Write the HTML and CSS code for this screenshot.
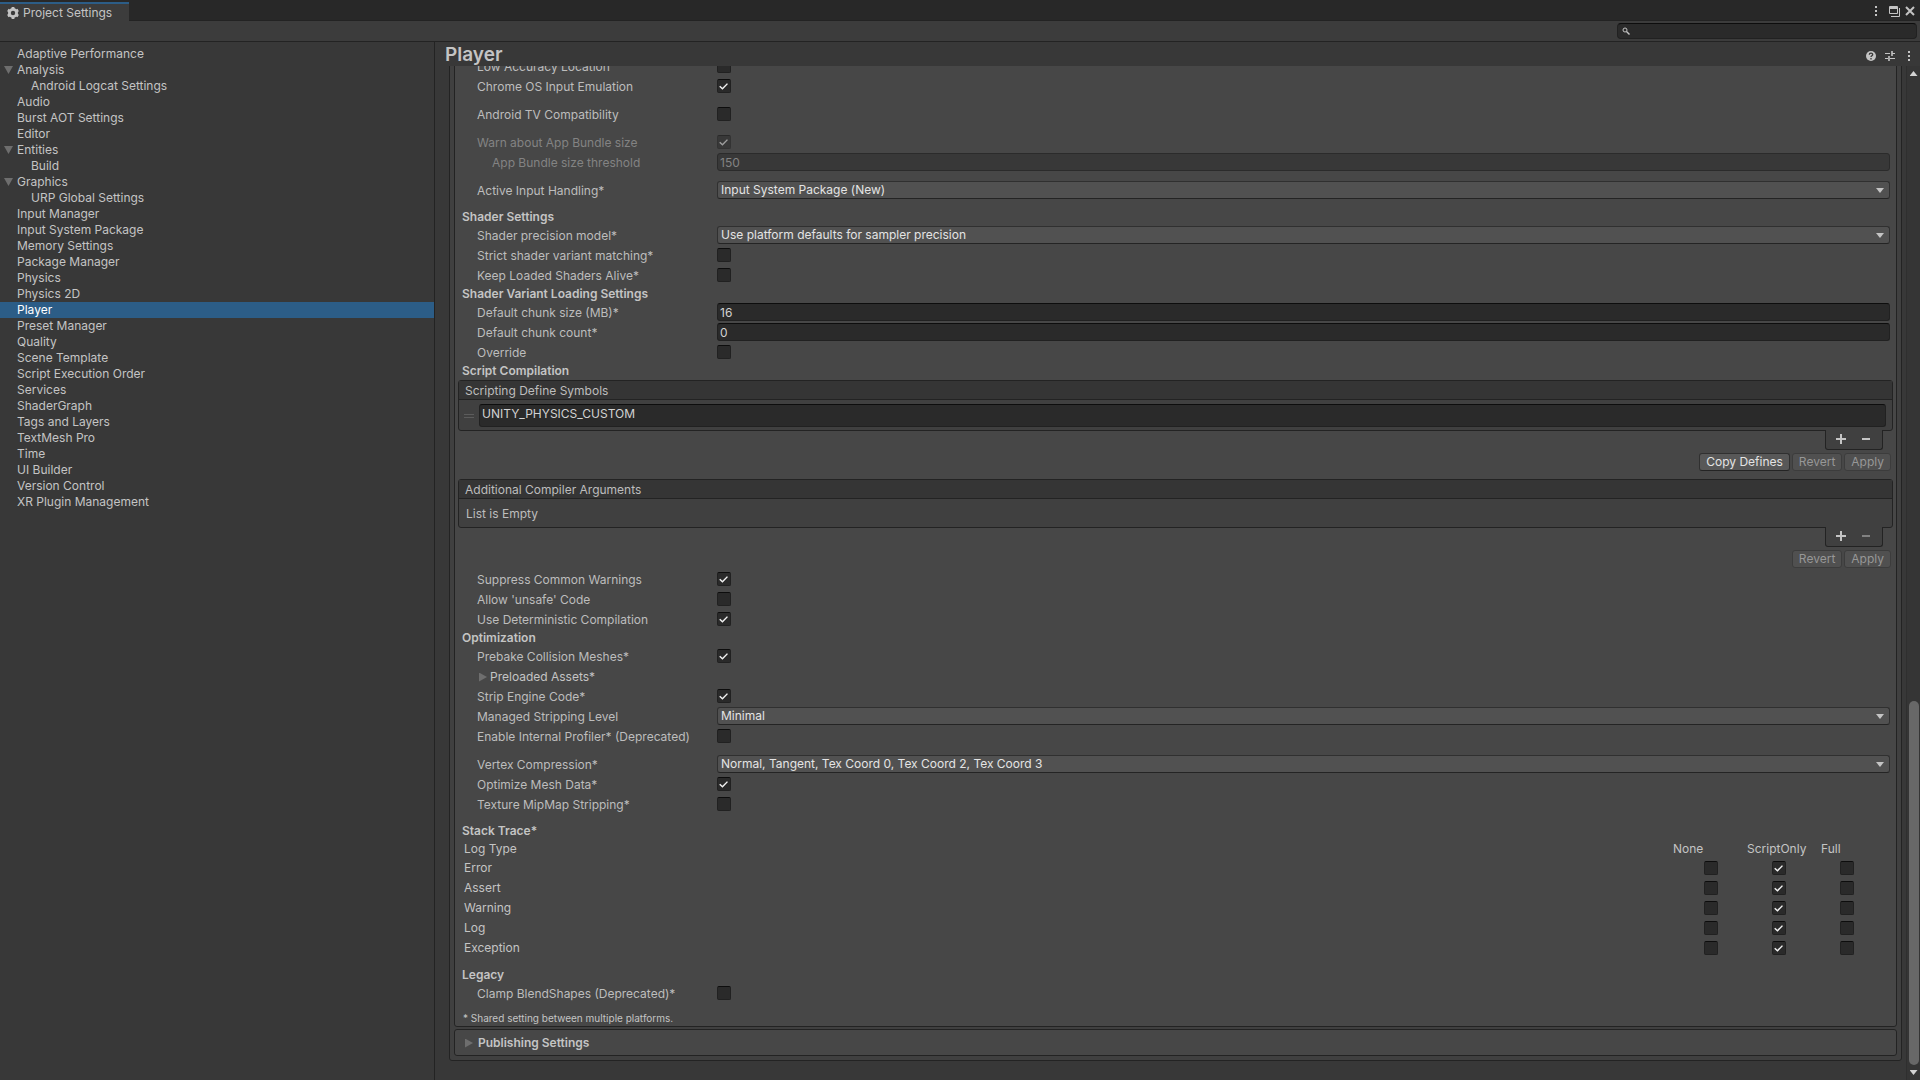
FILE: index.html
```html
<!DOCTYPE html>
<html lang="en">
<head>
    <meta charset="UTF-8">
    <meta name="viewport" content="width=device-width, initial-scale=1.0">
    <title>Project Settings</title>
    <link rel="stylesheet" href="styles.css">
</head>
<body>

    <!-- Window tab bar -->
    <header class="tab-bar">
        <div class="tab">
            <svg class="icon" width="14" height="14" viewBox="0 0 14 14">
                <circle cx="7" cy="7" r="3.6" fill="none" stroke="#c4c4c4" stroke-width="2.8"/>
                <path d="M7 1v12M1.8 4l10.4 6M1.8 10l10.4-6" stroke="#c4c4c4" stroke-width="2.8" fill="none"/>
                <circle cx="7" cy="7" r="2.2" fill="#3c3c3c"/>
            </svg>
            <span>Project Settings</span>
        </div>
        <div class="window-buttons">
            <button type="button" aria-label="Menu">
                <svg width="16" height="16" viewBox="0 0 16 16" fill="#c4c4c4"><path d="M7 3h2v2H7zM7 7h2v2H7zM7 11h2v2H7z"/></svg>
            </button>
            <button type="button" aria-label="Maximize">
                <svg width="16" height="16" viewBox="0 0 16 16" fill="none" stroke="#c4c4c4"><path d="M4.5 3.5h8v7h-8zM4 4.5h9M4 5.5h9M14.5 5v8.500H6"/></svg>
            </button>
            <button type="button" aria-label="Close">
                <svg width="16" height="16" viewBox="0 0 16 16" fill="none" stroke="#c4c4c4" stroke-width="2"><path d="M4 4l8 8M12 4l-8 8"/></svg>
            </button>
        </div>
    </header>

    <div class="toolbar">
        <label class="search">
            <svg width="8" height="8" viewBox="0 0 8 8" fill="none" stroke="#c4c4c4"><circle cx="3" cy="3" r="2"/><path d="M4.5 4.5l3 3" stroke-width="1.4"/></svg>
            <input type="text" aria-label="Search settings">
        </label>
    </div>

    <div class="content">
        <nav class="sidebar">
            <a href="#">Adaptive Performance</a>
            <a href="#" class="open">Analysis</a>
            <a href="#" class="child">Android Logcat Settings</a>
            <a href="#">Audio</a>
            <a href="#">Burst AOT Settings</a>
            <a href="#">Editor</a>
            <a href="#" class="open">Entities</a>
            <a href="#" class="child">Build</a>
            <a href="#" class="open">Graphics</a>
            <a href="#" class="child">URP Global Settings</a>
            <a href="#">Input Manager</a>
            <a href="#">Input System Package</a>
            <a href="#">Memory Settings</a>
            <a href="#">Package Manager</a>
            <a href="#">Physics</a>
            <a href="#">Physics 2D</a>
            <a href="#" class="selected">Player</a>
            <a href="#">Preset Manager</a>
            <a href="#">Quality</a>
            <a href="#">Scene Template</a>
            <a href="#">Script Execution Order</a>
            <a href="#">Services</a>
            <a href="#">ShaderGraph</a>
            <a href="#">Tags and Layers</a>
            <a href="#">TextMesh Pro</a>
            <a href="#">Time</a>
            <a href="#">UI Builder</a>
            <a href="#">Version Control</a>
            <a href="#">XR Plugin Management</a>
        </nav>

        <main class="main">
            <div class="title-row">
                <h1>Player</h1>
                <div class="title-buttons">
                    <button type="button" aria-label="Help">
                        <svg width="16" height="16" viewBox="0 0 16 16"><circle cx="8" cy="8" r="5" fill="#c4c4c4"/><path d="M6.3 6.8c0-2.2 3.4-2.2 3.4-.2 0 1.2-1.7 1.1-1.7 2.4M8 10v1.4" fill="none" stroke="#383838" stroke-width="1.3"/></svg>
                    </button>
                    <button type="button" aria-label="Presets">
                        <svg width="16" height="16" viewBox="0 0 16 16" fill="none" stroke="#c4c4c4"><path d="M3 5.5h5M10 5.5h3M3 10.5h3M8 10.5h5"/><path d="M10 3v5M7 8v5" stroke-width="1.6"/></svg>
                    </button>
                    <button type="button" aria-label="More">
                        <svg width="16" height="16" viewBox="0 0 16 16" fill="#c4c4c4"><path d="M7 3h2v2H7zM7 7h2v2H7zM7 11h2v2H7z"/></svg>
                    </button>
                </div>
            </div>

            <div class="scroll-area">
                <div class="scroll-view">
                    <div class="outer-box">
                        <section class="box settings">
                            <div class="row"><label for="low-accuracy">Low Accuracy Location</label><input type="checkbox" id="low-accuracy"></div>
                            <div class="row"><label for="chrome-os">Chrome OS Input Emulation</label><input type="checkbox" id="chrome-os" checked></div>
                            <div class="row space"><label for="android-tv">Android TV Compatibility</label><input type="checkbox" id="android-tv"></div>
                            <div class="row space disabled"><label for="warn-bundle">Warn about App Bundle size</label><input type="checkbox" id="warn-bundle" checked disabled></div>
                            <div class="row disabled"><label for="bundle-size" class="indent">App Bundle size threshold</label><input type="text" id="bundle-size" value="150" disabled></div>
                            <div class="row space"><label for="input-handling">Active Input Handling*</label><select id="input-handling"><option>Input System Package (New)</option></select></div>

                            <h2 class="space">Shader Settings</h2>
                            <div class="row"><label for="precision">Shader precision model*</label><select id="precision"><option>Use platform defaults for sampler precision</option></select></div>
                            <div class="row"><label for="strict">Strict shader variant matching*</label><input type="checkbox" id="strict"></div>
                            <div class="row"><label for="keep-shaders">Keep Loaded Shaders Alive*</label><input type="checkbox" id="keep-shaders"></div>

                            <h2>Shader Variant Loading Settings</h2>
                            <div class="row"><label for="chunk-size">Default chunk size (MB)*</label><input type="text" id="chunk-size" value="16"></div>
                            <div class="row"><label for="chunk-count">Default chunk count*</label><input type="text" id="chunk-count" value="0"></div>
                            <div class="row"><label for="override">Override</label><input type="checkbox" id="override"></div>

                            <h2>Script Compilation</h2>
                            <div class="list">
                                <div class="list-header">Scripting Define Symbols</div>
                                <div class="list-item">
                                    <span class="handle"></span>
                                    <input type="text" value="UNITY_PHYSICS_CUSTOM" aria-label="Define symbol">
                                </div>
                            </div>
                            <div class="list-footer">
                                <button type="button" class="plus" aria-label="Add"></button>
                                <button type="button" class="minus" aria-label="Remove"></button>
                            </div>
                            <div class="button-row">
                                <button type="button" class="button">Copy Defines</button>
                                <button type="button" class="button" disabled>Revert</button>
                                <button type="button" class="button" disabled>Apply</button>
                            </div>

                            <div class="list second">
                                <div class="list-header">Additional Compiler Arguments</div>
                                <div class="list-empty">List is Empty</div>
                            </div>
                            <div class="list-footer">
                                <button type="button" class="plus" aria-label="Add"></button>
                                <button type="button" class="minus" aria-label="Remove" disabled></button>
                            </div>
                            <div class="button-row">
                                <button type="button" class="button" disabled>Revert</button>
                                <button type="button" class="button" disabled>Apply</button>
                            </div>

                            <div class="row"><label for="suppress">Suppress Common Warnings</label><input type="checkbox" id="suppress" checked></div>
                            <div class="row"><label for="unsafe">Allow 'unsafe' Code</label><input type="checkbox" id="unsafe"></div>
                            <div class="row"><label for="deterministic">Use Deterministic Compilation</label><input type="checkbox" id="deterministic" checked></div>

                            <h2>Optimization</h2>
                            <div class="row"><label for="prebake">Prebake Collision Meshes*</label><input type="checkbox" id="prebake" checked></div>
                            <div class="row foldout"><button type="button">Preloaded Assets*</button></div>
                            <div class="row"><label for="strip">Strip Engine Code*</label><input type="checkbox" id="strip" checked></div>
                            <div class="row"><label for="stripping-level">Managed Stripping Level</label><select id="stripping-level"><option>Minimal</option></select></div>
                            <div class="row"><label for="profiler">Enable Internal Profiler* (Deprecated)</label><input type="checkbox" id="profiler"></div>
                            <div class="row space"><label for="vertex">Vertex Compression*</label><select id="vertex"><option>Normal, Tangent, Tex Coord 0, Tex Coord 2, Tex Coord 3</option></select></div>
                            <div class="row"><label for="optimize-mesh">Optimize Mesh Data*</label><input type="checkbox" id="optimize-mesh" checked></div>
                            <div class="row"><label for="mipmap">Texture MipMap Stripping*</label><input type="checkbox" id="mipmap"></div>

                            <h2 class="space">Stack Trace*</h2>
                            <table class="stack-trace">
                                <thead>
                                    <tr><th>Log Type</th><th>None</th><th>ScriptOnly</th><th>Full</th></tr>
                                </thead>
                                <tbody>
                                    <tr><th>Error</th><td><input type="checkbox" aria-label="Error None"></td><td><input type="checkbox" aria-label="Error ScriptOnly" checked></td><td><input type="checkbox" aria-label="Error Full"></td></tr>
                                    <tr><th>Assert</th><td><input type="checkbox" aria-label="Assert None"></td><td><input type="checkbox" aria-label="Assert ScriptOnly" checked></td><td><input type="checkbox" aria-label="Assert Full"></td></tr>
                                    <tr><th>Warning</th><td><input type="checkbox" aria-label="Warning None"></td><td><input type="checkbox" aria-label="Warning ScriptOnly" checked></td><td><input type="checkbox" aria-label="Warning Full"></td></tr>
                                    <tr><th>Log</th><td><input type="checkbox" aria-label="Log None"></td><td><input type="checkbox" aria-label="Log ScriptOnly" checked></td><td><input type="checkbox" aria-label="Log Full"></td></tr>
                                    <tr><th>Exception</th><td><input type="checkbox" aria-label="Exception None"></td><td><input type="checkbox" aria-label="Exception ScriptOnly" checked></td><td><input type="checkbox" aria-label="Exception Full"></td></tr>
                                </tbody>
                            </table>

                            <h2 class="space">Legacy</h2>
                            <div class="row"><label for="clamp">Clamp BlendShapes (Deprecated)*</label><input type="checkbox" id="clamp"></div>
                            <p class="note">* Shared setting between multiple platforms.</p>
                        </section>

                        <section class="box publishing">
                            <button type="button">Publishing Settings</button>
                        </section>
                    </div>
                </div>

                <div class="scrollbar">
                    <span class="arrow-up"></span>
                    <div class="track"><div class="thumb"></div></div>
                    <span class="arrow-down"></span>
                </div>
            </div>
        </main>
    </div>

</body>
</html>
```
FILE: styles.css
```css
* {
    box-sizing: border-box;
}
body {
    display: flex;
    flex-direction: column;
    height: 100vh;
    margin: 0;
    overflow: hidden;
    background-color: #383838;
    color: #c4c4c4;
    font-family: Inter, sans-serif;
    font-size: 12px;
    line-height: 16px;
}
button,
input,
select {
    margin: 0;
    padding: 0;
    border: none;
    background: none;
    color: inherit;
    font: inherit;
}
svg {
    display: block;
}

/* Tab bar and toolbar */
.tab-bar {
    display: flex;
    justify-content: space-between;
    height: 21px;
    flex-shrink: 0;
    background-color: #282828;
    box-shadow: inset 0 -1px #232323;
}
.tab {
    display: flex;
    align-items: center;
    gap: 3px;
    margin-top: 2px;
    padding: 0 17px 0 6px;
    border-top: 2px solid #2c5d87;
    background-color: #3c3c3c;
}
.window-buttons {
    display: flex;
    align-items: center;
    gap: 1px;
    padding-right: 2px;
}
.toolbar {
    display: flex;
    justify-content: flex-end;
    flex-shrink: 0;
    height: 21px;
    padding: 2px 3px;
    background-color: #3c3c3c;
    border-bottom: 1px solid #232323;
}
.search {
    display: flex;
    align-items: center;
    gap: 4px;
    width: 300px;
    height: 16px;
    padding: 0 4px;
    border: 1px solid #212121;
    border-top-color: #0d0d0d;
    border-radius: 4px;
    background-color: #2a2a2a;
}
.search input {
    flex: 1;
}

.content {
    display: flex;
    flex: 1;
    min-height: 0;
}

/* Settings categories */
.sidebar {
    width: 435px;
    flex-shrink: 0;
    padding-top: 4px;
    border-right: 1px solid #232323;
}
.sidebar a {
    display: flex;
    align-items: center;
    height: 16px;
    padding-left: 17px;
    color: #c4c4c4;
    text-decoration: none;
}
.sidebar .child {
    padding-left: 31px;
}
.sidebar .open {
    padding-left: 4px;
}
.sidebar .open::before {
    content: "";
    width: 9px;
    height: 8px;
    margin-right: 4px;
    background-color: #6e6e6e;
    clip-path: polygon(0 0, 100% 0, 50% 100%);
}
.sidebar .selected {
    background-color: #2c5d87;
    color: #fff;
}

/* Right side */
.main {
    display: flex;
    flex-direction: column;
    flex: 1;
    min-width: 0;
}
.title-row {
    display: flex;
    justify-content: space-between;
    flex-shrink: 0;
    height: 24px;
    padding: 0 3px 0 10px;
}
h1 {
    margin: 0;
    font-size: 19px;
    font-weight: 600;
    line-height: 26px;
}
.title-buttons {
    display: flex;
    align-items: center;
    gap: 3px;
    padding-top: 4px;
}
.scroll-area {
    display: flex;
    flex: 1;
    min-height: 0;
}
/* Scrolled to the end, so the content sits against the bottom edge */
.scroll-view {
    display: flex;
    flex-direction: column;
    justify-content: flex-end;
    flex: 1;
    min-width: 0;
    padding: 0 4px 19px 14px;
    overflow: hidden;
}
.outer-box {
    flex-shrink: 0;
    padding: 4px;
    border: 1px solid #232323;
    border-radius: 3px;
    background-color: #404040;
}
.box {
    border: 1px solid #232323;
    border-radius: 3px;
    background-color: #474747;
}
.settings {
    padding: 4px 1px 0 3px;
}

/* Property rows */
.row {
    display: flex;
    align-items: center;
    height: 18px;
    margin-bottom: 2px;
    padding: 0 5px 0 19px;
}
.row label {
    width: 240px;
    flex-shrink: 0;
    padding-top: 2px;
    color: #bdbdbd;
}
.row .indent {
    padding-left: 15px;
}
.row.disabled label {
    color: #838383;
}
.space {
    margin-top: 10px;
}
h2 {
    height: 17px;
    margin: 0;
    padding-left: 4px;
    color: #c4c4c4;
    font-size: 12px;
    font-weight: 600;
    line-height: 16px;
}
h2.space {
    margin-top: 10px;
}
input[type="text"] {
    min-width: 0;
}
.row input[type="text"],
.list-item input {
    flex: 1;
    height: 18px;
    padding: 0 2px;
    border: 1px solid #212121;
    border-top-color: #0d0d0d;
    border-radius: 3px;
    background-color: #2a2a2a;
    color: #d2d2d2;
}
.row.disabled input[type="text"] {
    border-color: #2b2b2b;
    background-color: #383838;
    color: #838383;
}
input[type="checkbox"] {
    appearance: none;
    display: block;
    width: 14px;
    height: 14px;
    border: 1px solid #212121;
    border-top-color: #0d0d0d;
    border-radius: 2px;
    background-color: #2a2a2a;
}
input[type="checkbox"]:checked::before {
    content: "";
    display: block;
    width: 9px;
    height: 7px;
    margin: 3px 1px;
    background-color: #f0f0f0;
    clip-path: polygon(2% 54%, 14% 40%, 38% 68%, 88% 2%, 100% 14%, 39% 98%);
}
.row.disabled input[type="checkbox"] {
    opacity: 0.5;
}
select {
    appearance: none;
    flex: 1;
    min-width: 0;
    height: 18px;
    padding: 0 20px 1px 3px;
    border: 1px solid #303030;
    border-bottom-color: #242424;
    border-radius: 3px;
    background: #515151;
    color: #e4e4e4;
}
.row:has(select) {
    position: relative;
}
.row:has(select)::after {
    content: "";
    position: absolute;
    right: 11px;
    top: 7px;
    width: 8px;
    height: 5px;
    background-color: #c4c4c4;
    clip-path: polygon(0 0, 100% 0, 50% 100%);
    pointer-events: none;
}
.foldout {
    padding-left: 21px;
}
.foldout button,
.publishing button {
    display: flex;
    align-items: center;
    gap: 3px;
}
.foldout button {
    padding-top: 2px;
}
.foldout button::before,
.publishing button::before {
    content: "";
    width: 8px;
    height: 9px;
    background-color: #6e6e6e;
    clip-path: polygon(0 0, 100% 50%, 0 100%);
}

/* Reorderable lists */
.list {
    margin-right: 2px;
    border: 1px solid #232323;
    border-radius: 3px;
    background-color: #404040;
}
.list.second {
    margin-top: 8px;
}
.list-header {
    height: 19px;
    padding: 1px 6px 0;
    border-bottom: 1px solid #232323;
    background-color: #353535;
    color: #bdbdbd;
    line-height: 18px;
}
.list-item {
    display: flex;
    align-items: center;
    gap: 5px;
    padding: 4px 6px 3px 5px;
}
.list-item input {
    height: 23px;
    padding-bottom: 4px;
}
.handle {
    width: 10px;
    height: 4px;
    border: solid #5c5c5c;
    border-width: 1px 0;
}
.list-empty {
    height: 28px;
    padding-left: 7px;
    color: #bdbdbd;
    line-height: 30px;
}
.list-footer {
    position: relative;
    display: flex;
    gap: 9px;
    width: 58px;
    height: 20px;
    margin: -1px 12px 0 auto;
    padding: 0 7px;
    border: 1px solid #232323;
    border-top: none;
    border-radius: 0 0 3px 3px;
    background-color: #404040;
}
.list-footer button {
    position: relative;
    width: 16px;
    height: 19px;
}
.list-footer button::before,
.plus::after {
    content: "";
    position: absolute;
    left: 4px;
    top: 8px;
    width: 8px;
    height: 2px;
    background-color: #c4c4c4;
}
.list-footer .plus::before {
    left: 3px;
    width: 10px;
}
.list-footer .plus::after {
    left: 7px;
    top: 4px;
    width: 2px;
    height: 10px;
}
.list-footer button:disabled {
    opacity: 0.5;
}
.button-row {
    display: flex;
    justify-content: flex-end;
    gap: 2px;
    margin: 3px 4px 0 0;
}
.button-row + .row {
    margin-top: 2px;
}
.button {
    height: 18px;
    padding: 0 6px 1px;
    border: 1px solid #303030;
    border-bottom-color: #242424;
    border-radius: 3px;
    background-color: #585858;
    color: #e4e4e4;
}
.button:disabled {
    border-color: #3c3c3c;
    background-color: #505050;
    color: #979797;
}

/* Stack trace table */
.stack-trace,
.stack-trace thead,
.stack-trace tbody {
    display: block;
}
.stack-trace tr {
    display: flex;
    align-items: center;
    height: 18px;
    margin-bottom: 2px;
}
.stack-trace thead tr {
    height: 17px;
}
.stack-trace tbody tr {
    padding-right: 19px;
}
.stack-trace th {
    width: 74px;
    padding: 0;
    font-weight: normal;
    text-align: left;
}
.stack-trace th:first-child {
    flex: 1;
    padding-left: 6px;
}
.stack-trace td {
    width: 68px;
    padding: 0 0 0 32px;
}
.note {
    height: 16px;
    margin: 8px 0 0 5px;
    font-size: 10px;
}

.publishing {
    margin-top: 2px;
    padding: 5px 10px 4px;
}
.publishing button {
    gap: 5px;
    font-weight: 600;
}

/* Scrollbar */
.scrollbar {
    display: flex;
    flex-direction: column;
    align-items: center;
    width: 14px;
    border-left: 1px solid #2f2f2f;
    background-color: #353535;
}
.arrow-up,
.arrow-down {
    width: 8px;
    height: 5px;
    margin: 5px 0;
    background-color: #d2d2d2;
    clip-path: polygon(0 0, 100% 0, 50% 100%);
}
.arrow-up {
    clip-path: polygon(50% 0, 100% 100%, 0 100%);
}
.track {
    display: flex;
    flex-direction: column;
    justify-content: flex-end;
    flex: 1;
}
.thumb {
    width: 10px;
    height: 37%;
    border-radius: 5px;
    background-color: #686868;
}
```
